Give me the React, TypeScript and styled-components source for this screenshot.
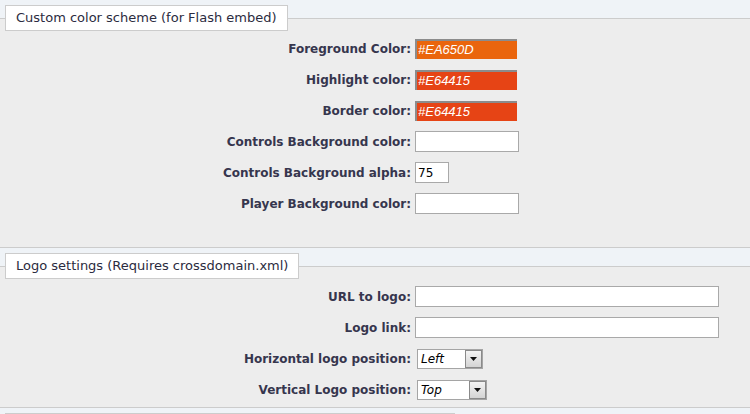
import React from 'react';
import styled, { createGlobalStyle, css } from 'styled-components';

const GlobalStyle = createGlobalStyle`
  html, body {
    margin: 0;
    padding: 0;
    background: #eff3f7;
  }
  body {
    font-family: 'DejaVu Sans', Verdana, sans-serif;
    font-size: 12px;
  }
`;

const Section = styled.fieldset<{ bottom: number }>`
  margin: 5px 0 0 0;
  padding: 2px 0 ${props => props.bottom}px 0;
  min-width: 0;
  border: none;
  border-top: 1px solid #cccccc;
  border-bottom: 1px solid #cccccc;
  background: #ededed;
`;

const Legend = styled.legend<{ wide?: number }>`
  margin-left: 5px;
  padding: 0 10px;
  height: 24px;
  line-height: 24px;
  border: 1px solid #cccccc;
  background: #ffffff;
  color: #2b2b40;
  font-size: 13px;
  ${props =>
    props.wide &&
    css`
      width: ${props.wide}px;
      box-sizing: border-box;
    `}
`;

const Row = styled.div`
  display: grid;
  grid-template-columns: 411px auto;
  column-gap: 4px;
  height: 31px;
  align-items: center;
`;

const Label = styled.label`
  text-align: right;
  font-weight: bold;
  font-size: 12px;
  color: #36364e;
  white-space: nowrap;
`;

const TextInput = styled.input<{ w: number; swatch?: string }>`
  box-sizing: border-box;
  width: ${props => props.w}px;
  height: 21px;
  margin: 0;
  padding: 0 2px;
  border: 1px solid #a9a9a9;
  background: #ffffff;
  font-family: 'DejaVu Sans', Verdana, sans-serif;
  font-size: 12px;
  color: #000000;
  outline: none;
  ${props =>
    props.swatch &&
    css`
      height: 20px;
      border: none;
      border-top: 2px solid #8c8c8c;
      border-left: 2px solid #8c8c8c;
      background: ${props.swatch};
      color: #ffffff;
      font-family: 'Liberation Sans', Arial, sans-serif;
      font-style: italic;
      font-size: 13px;
      padding: 0 1px;
    `}
`;

const Select = styled.div<{ w: number }>`
  box-sizing: border-box;
  margin-left: 2px;
  width: ${props => props.w}px;
  height: 20px;
  display: flex;
  align-items: center;
  justify-content: space-between;
  border: 1px solid #a5a5a5;
  background: #ffffff;
  padding-left: 3px;
`;

const SelectValue = styled.span`
  font-family: 'DejaVu Sans', Verdana, sans-serif;
  font-style: italic;
  font-size: 12px;
  color: #000000;
`;

const ArrowButton = styled.span`
  box-sizing: border-box;
  width: 17px;
  height: 18px;
  display: flex;
  align-items: center;
  justify-content: center;
  border: 1px solid #8a8a8a;
  background: linear-gradient(#f4f4f4, #d4d4d4);
`;

const Arrow = () => (
  <svg width="7" height="4" viewBox="0 0 7 4">
    <path d="M0 0 H7 L3.5 4 Z" fill="#111" />
  </svg>
);

interface Field {
  label: string;
  value?: string;
  width: number;
  swatch?: string;
  select?: boolean;
}

const colorFields: Field[] = [
  { label: 'Foreground Color:', value: '#EA650D', width: 102, swatch: '#ea650d' },
  { label: 'Highlight color:', value: '#E64415', width: 102, swatch: '#e64415' },
  { label: 'Border color:', value: '#E64415', width: 102, swatch: '#e64415' },
  { label: 'Controls Background color:', width: 104 },
  { label: 'Controls Background alpha:', value: '75', width: 34 },
  { label: 'Player Background color:', width: 104 }
];

const logoFields: Field[] = [
  { label: 'URL to logo:', width: 304 },
  { label: 'Logo link:', width: 304 },
  { label: 'Horizontal logo position:', value: 'Left', width: 66, select: true },
  { label: 'Vertical Logo position:', value: 'Top', width: 70, select: true }
];

const FieldRow: React.FC<{ field: Field }> = ({ field }) => (
  <Row>
    <Label>{field.label}</Label>
    {field.select ? (
      <Select w={field.width}>
        <SelectValue>{field.value}</SelectValue>
        <ArrowButton>
          <Arrow />
        </ArrowButton>
      </Select>
    ) : (
      <div>
        <TextInput
          w={field.width}
          swatch={field.swatch}
          defaultValue={field.value ?? ''}
        />
      </div>
    )}
  </Row>
);

export default function App() {
  return (
    <>
      <GlobalStyle />
      <Section bottom={28}>
        <Legend>Custom color scheme (for Flash embed)</Legend>
        {colorFields.map(field => (
          <FieldRow key={field.label} field={field} />
        ))}
      </Section>
      <Section bottom={2}>
        <Legend>Logo settings (Requires crossdomain.xml)</Legend>
        {logoFields.map(field => (
          <FieldRow key={field.label} field={field} />
        ))}
      </Section>
      <Section bottom={40}>
        <Legend wide={450}>&nbsp;</Legend>
      </Section>
    </>
  );
}
